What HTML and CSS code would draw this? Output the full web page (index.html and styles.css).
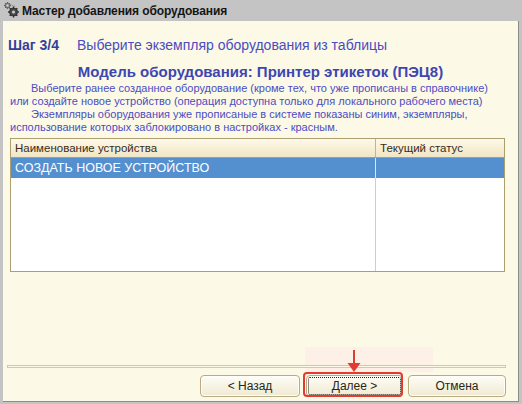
FILE: index.html
```html
<!DOCTYPE html>
<html lang="ru">
<head>
<meta charset="utf-8">
<title>Мастер добавления оборудования</title>
<link rel="stylesheet" href="styles.css">
</head>
<body>
<div class="window">
  <div class="titlebar">
    <svg class="app-icon" width="17" height="17" viewBox="0 0 17 17">
      <g fill="#8a8a8a" stroke="#555" stroke-width="0.6">
        <circle cx="4.5" cy="4.5" r="2.6"/>
      </g>
      <circle cx="4.5" cy="4.5" r="1" fill="#ddd"/>
      <path d="M4.5 1.2v1.2M4.5 6.6v1.2M1.2 4.5h1.2M6.6 4.5h1.2M2.2 2.2l.8.8M6 6l.8.8M2.2 6.8l.8-.8M6 3l.8-.8" stroke="#555" stroke-width="1"/>
      <path d="M7.5 3.5 L12.5 5.5" stroke="#666" stroke-width="0.8" stroke-dasharray="1 1"/>
      <circle cx="10.5" cy="11" r="4" fill="#4a4a4a" stroke="#222" stroke-width="0.8"/>
      <circle cx="10.5" cy="11" r="1.5" fill="#cfcfcf"/>
      <path d="M10.5 5.6v1.6M10.5 14.8v1.6M5.1 11h1.6M14.3 11h1.6M6.7 7.2l1.1 1.1M13.2 13.7l1.1 1.1M6.7 14.8l1.1-1.1M13.2 8.3l1.1-1.1" stroke="#2a2a2a" stroke-width="1.4"/>
    </svg>
    <span class="title-text">Мастер добавления оборудования</span>
  </div>
  <div class="client">
    <div class="step-row">
      <span class="step-num">Шаг 3/4</span>
      <span class="step-desc">Выберите экземпляр оборудования из таблицы</span>
    </div>
    <div class="model-title">Модель оборудования: Принтер этикеток (ПЭЦ8)</div>
    <div class="hint">
      <span class="line indent">Выберите ранее созданное оборудование (кроме тех, что уже прописаны в справочнике)</span>
      <span class="line">или создайте новое устройство (операция доступна только для локального рабочего места)</span>
      <span class="line indent">Экземпляры оборудования уже прописаные в системе показаны синим, экземпляры,</span>
      <span class="line">использование которых заблокировано в настройках - красным.</span>
    </div>
    <div class="grid">
      <div class="grid-head">
        <div class="col-name">Наименование устройства</div>
        <div class="col-status">Текущий статус</div>
      </div>
      <div class="grid-body">
        <div class="grid-row selected">
          <div class="col-name">СОЗДАТЬ НОВОЕ УСТРОЙСТВО</div>
          <div class="col-status"></div>
        </div>
        <div class="grid-fill">
          <div class="col-name"></div>
          <div class="col-status"></div>
        </div>
      </div>
    </div>
    <div class="spacer"></div>
    <div class="separator"></div>
    <div class="buttons">
      <button class="btn btn-back">&lt; Назад</button>
      <button class="btn btn-default">Далее &gt;</button>
      <button class="btn btn-cancel">Отмена</button>
    </div>
    <div class="annot-bg"></div>
    <div class="annot-box"></div>
    <svg class="annot-arrow" width="16" height="24" viewBox="0 0 16 24">
      <path d="M8 0 V15" stroke="#e53a33" stroke-width="2"/>
      <path d="M1.5 13 L14.5 13 L8 22 Z" fill="#e53a33"/>
    </svg>
  </div>
</div>
</body>
</html>
```

FILE: styles.css
```css
html, body {
  margin: 0;
  padding: 0;
}
body {
  width: 522px;
  height: 404px;
  overflow: hidden;
  background: #c4c4c4;
  font-family: "Liberation Sans", Arial, sans-serif;
}
.window {
  width: 522px;
  height: 404px;
  display: flex;
  flex-direction: column;
  background: #c4c4c4;
}
.titlebar {
  height: 21px;
  display: flex;
  align-items: center;
  padding-left: 3px;
  gap: 2px;
  box-sizing: border-box;
}
.app-icon {
  display: block;
  margin-top: -2px;
}
.title-text {
  font-weight: bold;
  font-size: 12px;
  color: #151515;
  letter-spacing: -0.1px;
}
.client {
  position: relative;
  margin: 0 3px 0 3px;
  height: 380px;
  background: #fcf9e6;
  border-right: 1px solid #8c8c8c;
  border-bottom: 1px solid #8c8c8c;
  display: flex;
  flex-direction: column;
}
.step-row {
  margin-top: 16px;
  padding-left: 5px;
  height: 16px;
  display: flex;
  align-items: center;
  font-size: 14px;
}
.step-num {
  font-weight: bold;
  color: #33409f;
  width: 69px;
}
.step-desc {
  color: #4a4cc0;
}
.model-title {
  margin-top: 10px;
  height: 17px;
  line-height: 17px;
  text-align: center;
  font-weight: bold;
  font-size: 15px;
  color: #3e46b2;
}
.hint {
  margin-top: 2px;
  padding-left: 7px;
  font-size: 11px;
  line-height: 13px;
  color: #4b4dc4;
}
.hint .line {
  display: block;
  white-space: nowrap;
}
.hint .indent {
  padding-left: 21px;
}
.grid {
  margin: 4px 0 0 7px;
  width: 495px;
  height: 134px;
  box-sizing: border-box;
  border: 1px solid #ab9f70;
  background: #ffffff;
  display: flex;
  flex-direction: column;
}
.grid-head {
  display: flex;
  height: 19px;
  box-sizing: border-box;
  border-bottom: 1px solid #ab9f70;
  background: linear-gradient(#fdf9ea, #f1e6c4);
  font-size: 11.5px;
  color: #3a2b1a;
}
.grid-head .col-name {
  width: 365px;
  box-sizing: border-box;
  border-right: 1px solid #c2b588;
  padding-left: 4px;
  line-height: 18px;
}
.grid-head .col-status {
  flex: 1;
  padding-left: 4px;
  line-height: 18px;
}
.grid-body {
  flex: 1;
  display: flex;
  flex-direction: column;
}
.grid-row {
  display: flex;
  height: 20px;
}
.grid-row.selected {
  background: #5490cf;
  color: #ffffff;
  font-size: 12.5px;
}
.grid-row .col-name {
  width: 365px;
  box-sizing: border-box;
  border-right: 1px solid #dfe6ee;
  padding-left: 4px;
  line-height: 20px;
  white-space: nowrap;
}
.grid-row .col-status {
  flex: 1;
}
.grid-fill {
  flex: 1;
  display: flex;
}
.grid-fill .col-name {
  width: 365px;
  box-sizing: border-box;
  border-right: 1px solid #c7ced6;
}
.spacer {
  flex: 1;
  position: relative;
  z-index: 1;
}
.separator {
  position: relative;
  z-index: 1;
  margin-left: 4px;
  width: 499px;
  height: 3px;
  box-sizing: border-box;
  border: 1px solid #d6c99c;
  background: #fcf9e6;
}
.buttons {
  display: flex;
  justify-content: flex-end;
  padding-right: 12px;
  margin-top: 7px;
  margin-bottom: 4px;
  position: relative;
  z-index: 2;
}
.btn {
  height: 22px;
  padding: 0;
  border: 1px solid #b8ab80;
  border-radius: 4px;
  background: linear-gradient(#fefdf6, #f0ead3);
  font-family: "Liberation Sans", Arial, sans-serif;
  font-size: 12px;
  color: #2b2618;
  box-shadow: inset 0 0 0 1px #fffef8;
}
.btn-back {
  width: 100px;
  margin-right: 6px;
}
.btn-default {
  width: 97px;
  margin-right: 5px;
  outline: 1px dotted #222;
  outline-offset: -3px;
}
.btn-cancel {
  width: 98px;
}
.annot-bg {
  position: absolute;
  left: 302px;
  top: 326px;
  width: 128px;
  height: 25px;
  background: #fdf1e7;
  z-index: 0;
}
.annot-box {
  position: absolute;
  left: 300px;
  top: 351px;
  width: 96px;
  height: 21px;
  border: 2px solid #e53a33;
  border-radius: 4px;
  z-index: 3;
}
.annot-arrow {
  position: absolute;
  left: 343px;
  top: 329px;
  z-index: 4;
}
```
